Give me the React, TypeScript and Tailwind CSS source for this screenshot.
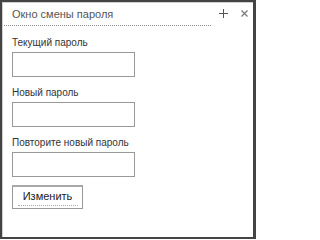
const FIELDS = ["Текущий пароль", "Новый пароль", "Повторите новый пароль"];

export default function App() {
  return (
    <div className="w-[256px] h-[239px] bg-[#444444] p-[2px] pr-[3px] font-['Liberation_Sans',Arial,sans-serif]">
      <div className="relative h-full bg-white border-l border-t border-[#cfcfcf] flex flex-col">
        <div className="flex items-center h-[23px] ml-[1px] mr-[42px] border-b border-dotted border-[#888]">
          <span className="pl-[8px] pt-[1px] text-[11px] text-[#555]">Окно смены пароля</span>
        </div>
        <div className="absolute top-[6px] left-[216px] flex items-center gap-[13px]">
          <svg width="9" height="9" viewBox="0 0 9 9">
            <path d="M4.5 0v9M0 4.5h9" stroke="#555" strokeWidth="1" />
          </svg>
          <svg width="7" height="7" viewBox="0 0 7 7">
            <path d="M0.5 0.5l6 6M6.5 0.5l-6 6" stroke="#777" strokeWidth="1.2" />
          </svg>
        </div>
        <div className="flex flex-col pl-[9px] pt-[11px]">
          <div className="flex flex-col gap-[10px]">
            {FIELDS.map(label => (
              <div key={label} className="flex flex-col">
                <label className="text-[10px] leading-[12px] text-[#333]">{label}</label>
                <input className="mt-[3px] w-[123px] h-[25px] border border-[#999] outline-none" />
              </div>
            ))}
          </div>
          <button className="mt-[8px] w-[71px] h-[24px] border border-[#999] border-t-2 border-t-[#a8a8a8] bg-white text-[11px] text-[#222] flex flex-col items-center justify-center">
            <span className="leading-[13px]">Изменить</span>
            <span className="w-[60px] border-b border-dotted border-[#aaa] mt-[2px]" />
          </button>
        </div>
      </div>
    </div>
  );
}
